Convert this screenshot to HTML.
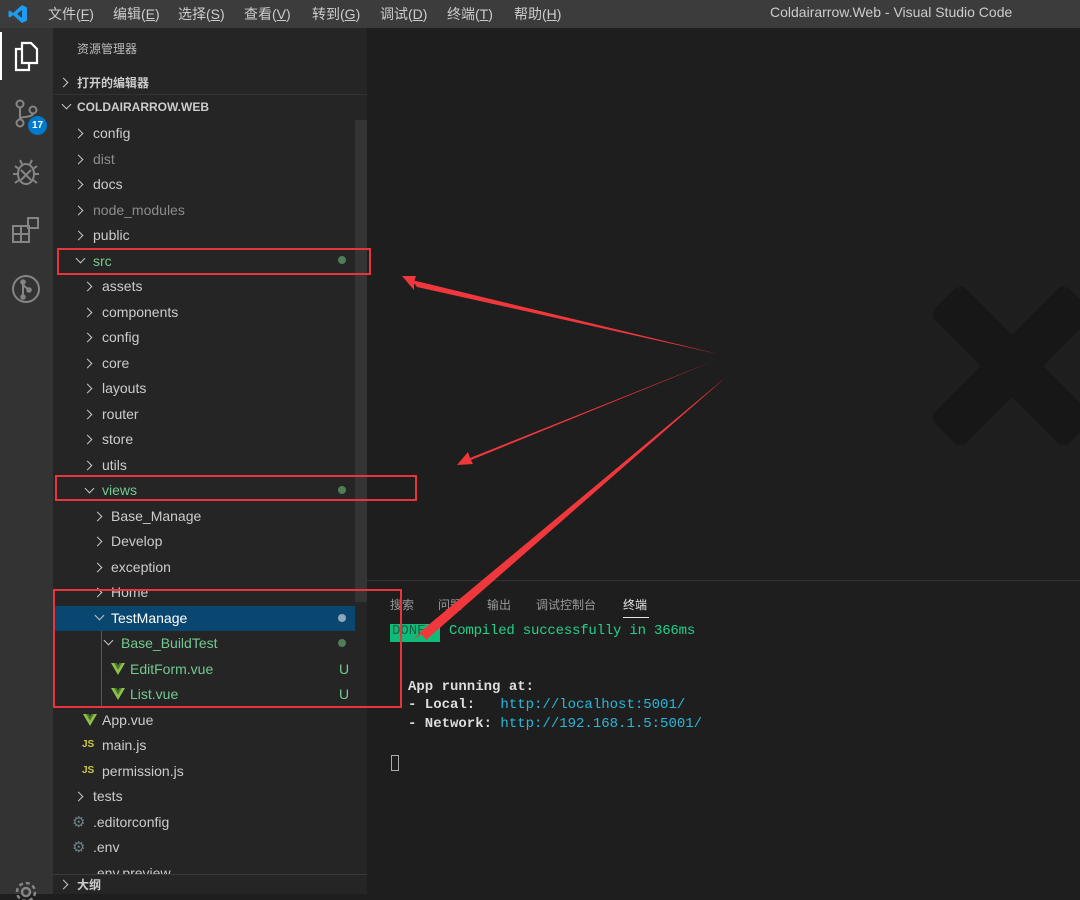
<!DOCTYPE html>
<html><head><meta charset="utf-8"><style>
*{margin:0;padding:0;box-sizing:border-box}
body{width:1080px;height:894px;overflow:hidden;background:#1e1e1e;font-family:"Liberation Sans","Noto Sans CJK SC",sans-serif;position:relative;color:#ccc}
.a{position:absolute}
.m{position:absolute;top:4px;font-size:14px;color:#ccc;white-space:nowrap}
.r{position:absolute;height:25px;font-size:14px;line-height:25px;color:#cccccc;white-space:nowrap}
.ch{position:absolute;width:7px;height:7px;border-right:1.5px solid #c5c5c5;border-bottom:1.5px solid #c5c5c5}
.cr{transform:rotate(-45deg)}
.cd{transform:rotate(45deg)}
.dot{position:absolute;left:338px;width:8px;height:8px;border-radius:50%;background:#4e7d57}
.g{color:#73c991}
.mono{font-family:"Liberation Mono","DejaVu Sans Mono",monospace;font-size:14px;position:absolute;white-space:pre}
.box{position:absolute;border:2px solid #e8353a}
.t{position:absolute;top:596px;font-size:12px;color:#999;white-space:nowrap}
</style></head><body>
<!-- title bar -->
<div class="a" style="left:0;top:0;width:1080px;height:28px;background:#3c3c3c"></div>
<svg class="a" style="left:8px;top:4px" width="20" height="20" viewBox="0 0 20 20"><path d="M14 1 L19 3.5 V16.5 L14 19 L5 11 L2 13.5 L0.5 12.5 V7.5 L2 6.5 L5 9 Z M14 6 L9 10 L14 14 Z" fill="#1f9cf0" fill-rule="evenodd"/></svg>
<div class="m" style="left:48px">文件(<u>F</u>)</div>
<div class="m" style="left:113px">编辑(<u>E</u>)</div>
<div class="m" style="left:178px">选择(<u>S</u>)</div>
<div class="m" style="left:244px">查看(<u>V</u>)</div>
<div class="m" style="left:312px">转到(<u>G</u>)</div>
<div class="m" style="left:380px">调试(<u>D</u>)</div>
<div class="m" style="left:447px">终端(<u>T</u>)</div>
<div class="m" style="left:514px">帮助(<u>H</u>)</div>
<div class="a" style="left:770px;top:4px;font-size:14px;color:#ccc">Coldairarrow.Web - Visual Studio Code</div>
<!-- activity bar -->
<div class="a" style="left:0;top:28px;width:53px;height:866px;background:#333333"></div>
<div class="a" style="left:0;top:32px;width:2px;height:48px;background:#fff"></div>
<svg class="a" style="left:12px;top:40px" width="28" height="32" viewBox="0 0 28 32" fill="none" stroke="#fff" stroke-width="2.2"><path d="M10 3 H19 L25 9 V23 H10 Z"/><path d="M10 9 H4 V30 H17 V23"/></svg>
<svg class="a" style="left:12px;top:98px" width="30" height="32" viewBox="0 0 30 32" fill="none" stroke="#858585" stroke-width="2"><circle cx="8" cy="6" r="3.5"/><circle cx="8" cy="25" r="3.5"/><circle cx="21" cy="12" r="3.5"/><path d="M8 9.5 V21.5 M21 15.5 C21 20 8 18 8 21"/></svg>
<div class="a" style="left:28px;top:116px;width:19px;height:19px;border-radius:50%;background:#007acc;color:#fff;font-size:10px;font-weight:bold;text-align:center;line-height:19px">17</div>
<svg class="a" style="left:10px;top:157px" width="32" height="32" viewBox="0 0 32 32" fill="none" stroke="#858585" stroke-width="2"><ellipse cx="16" cy="17" rx="8" ry="10"/><path d="M11 13 L21 23 M21 13 L11 23 M3 17 H8 M24 17 H29 M5 9 L9 12 M27 9 L23 12 M5 26 L9 23 M27 26 L23 23 M12 7 L10 3 M20 7 L22 3"/></svg>
<svg class="a" style="left:10px;top:215px" width="32" height="32" viewBox="0 0 32 32" fill="none" stroke="#858585" stroke-width="2"><rect x="3" y="11" width="8" height="8"/><rect x="11" y="11" width="8" height="8"/><rect x="3" y="19" width="8" height="8"/><rect x="11" y="19" width="8" height="8"/><rect x="18" y="3" width="10" height="10"/></svg>
<svg class="a" style="left:10px;top:273px" width="32" height="32" viewBox="0 0 32 32" fill="none" stroke="#858585" stroke-width="2"><circle cx="16" cy="16" r="13"/><path d="M13 8 V24 M13 12 L19 17"/><circle cx="13" cy="24" r="1.8" fill="#858585"/><circle cx="13" cy="9" r="1.8" fill="#858585"/><circle cx="19" cy="17" r="1.8" fill="#858585"/></svg>
<svg class="a" style="left:10px;top:876px" width="32" height="24" viewBox="0 0 32 24" fill="none" stroke="#858585" stroke-width="2.5"><circle cx="16" cy="16" r="9" stroke-dasharray="4 3"/><circle cx="16" cy="16" r="4"/></svg>
<!-- sidebar -->
<div class="a" style="left:53px;top:28px;width:314px;height:866px;background:#252526"></div>
<div class="a" style="left:355px;top:120px;width:12px;height:482px;background:#343435"></div>
<div class="a" style="left:77px;top:40px;font-size:12px;color:#bbb">资源管理器</div>
<div class="ch cr" style="left:60px;top:79px"></div>
<div class="a" style="left:77px;top:74px;font-size:12px;font-weight:bold;color:#ccc">打开的编辑器</div>
<div class="a" style="left:53px;top:94px;width:314px;height:1px;background:#333"></div>
<div class="ch cd" style="left:63px;top:101px"></div>
<div class="a" style="left:77px;top:100px;font-size:12px;font-weight:bold;color:#ccc">COLDAIRARROW.WEB</div>
<div class="a" style="left:53px;top:606px;width:302px;height:25px;background:#094771"></div>
<div class="a" style="left:101px;top:631px;width:1px;height:77px;background:#585858"></div>

<div class="ch cr" style="left:75px;top:130px"></div><div class="r" style="left:93px;top:121px">config</div>
<div class="ch cr" style="left:75px;top:156px"></div><div class="r" style="left:93px;top:147px;color:#8c8c8c">dist</div>
<div class="ch cr" style="left:75px;top:181px"></div><div class="r" style="left:93px;top:172px">docs</div>
<div class="ch cr" style="left:75px;top:207px"></div><div class="r" style="left:93px;top:198px;color:#8c8c8c">node_modules</div>
<div class="ch cr" style="left:75px;top:232px"></div><div class="r" style="left:93px;top:223px">public</div>
<div class="ch cd" style="left:77px;top:255px"></div><div class="r g" style="left:93px;top:249px">src</div><div class="dot" style="top:256px"></div>
<div class="ch cr" style="left:84px;top:283px"></div><div class="r" style="left:102px;top:274px">assets</div>
<div class="ch cr" style="left:84px;top:309px"></div><div class="r" style="left:102px;top:300px">components</div>
<div class="ch cr" style="left:84px;top:334px"></div><div class="r" style="left:102px;top:325px">config</div>
<div class="ch cr" style="left:84px;top:360px"></div><div class="r" style="left:102px;top:351px">core</div>
<div class="ch cr" style="left:84px;top:385px"></div><div class="r" style="left:102px;top:376px">layouts</div>
<div class="ch cr" style="left:84px;top:411px"></div><div class="r" style="left:102px;top:402px">router</div>
<div class="ch cr" style="left:84px;top:436px"></div><div class="r" style="left:102px;top:427px">store</div>
<div class="ch cr" style="left:84px;top:462px"></div><div class="r" style="left:102px;top:453px">utils</div>
<div class="ch cd" style="left:86px;top:485px"></div><div class="r g" style="left:102px;top:478px">views</div><div class="dot" style="top:486px"></div>
<div class="ch cr" style="left:94px;top:513px"></div><div class="r" style="left:111px;top:504px">Base_Manage</div>
<div class="ch cr" style="left:94px;top:538px"></div><div class="r" style="left:111px;top:529px">Develop</div>
<div class="ch cr" style="left:94px;top:564px"></div><div class="r" style="left:111px;top:555px">exception</div>
<div class="ch cr" style="left:94px;top:589px"></div><div class="r" style="left:111px;top:580px">Home</div>
<div class="ch cd" style="left:96px;top:612px"></div><div class="r" style="left:111px;top:606px;color:#fff">TestManage</div><div class="dot" style="top:614px;background:#8fa6bf"></div>
<div class="ch cd" style="left:105px;top:637px"></div><div class="r g" style="left:121px;top:631px">Base_BuildTest</div><div class="dot" style="top:639px"></div>
<svg class="a" style="left:111px;top:663px" width="14" height="12" viewBox="0 0 14 12"><path d="M0 0H5.5L7 3L8.5 0H14L7 12Z" fill="#8dc149"/><path d="M3 0H5.5L7 3L8.5 0H11L7 7Z" fill="#4f7a2a"/></svg>
<div class="r g" style="left:130px;top:657px">EditForm.vue</div><div class="r g" style="left:339px;top:657px">U</div>
<svg class="a" style="left:111px;top:688px" width="14" height="12" viewBox="0 0 14 12"><path d="M0 0H5.5L7 3L8.5 0H14L7 12Z" fill="#8dc149"/><path d="M3 0H5.5L7 3L8.5 0H11L7 7Z" fill="#4f7a2a"/></svg>
<div class="r g" style="left:130px;top:682px">List.vue</div><div class="r g" style="left:339px;top:682px">U</div>
<svg class="a" style="left:83px;top:714px" width="14" height="12" viewBox="0 0 14 12"><path d="M0 0H5.5L7 3L8.5 0H14L7 12Z" fill="#8dc149"/><path d="M3 0H5.5L7 3L8.5 0H11L7 7Z" fill="#4f7a2a"/></svg>
<div class="r" style="left:102px;top:708px">App.vue</div>
<div class="a" style="left:82px;top:739px;font-size:10px;font-weight:bold;color:#cbcb41">JS</div><div class="r" style="left:102px;top:733px">main.js</div>
<div class="a" style="left:82px;top:765px;font-size:10px;font-weight:bold;color:#cbcb41">JS</div><div class="r" style="left:102px;top:759px">permission.js</div>
<div class="ch cr" style="left:75px;top:793px"></div><div class="r" style="left:93px;top:784px">tests</div>
<div class="a" style="left:72px;top:813px;font-size:15px;color:#6d8086">⚙</div><div class="r" style="left:93px;top:810px">.editorconfig</div>
<div class="a" style="left:72px;top:838px;font-size:15px;color:#6d8086">⚙</div><div class="r" style="left:93px;top:835px">.env</div>
<div class="r" style="left:93px;top:861px">.env.preview</div>
<div class="a" style="left:53px;top:874px;width:314px;height:20px;background:#252526;border-top:1px solid #3a3a3a"></div>
<div class="ch cr" style="left:60px;top:881px"></div>
<div class="a" style="left:77px;top:876px;font-size:12px;font-weight:bold;color:#ccc">大纲</div>
<!-- editor watermark -->
<div class="a" style="left:367px;top:28px;width:713px;height:552px;overflow:hidden">
<div class="a" style="left:550px;top:316px;width:190px;height:44px;border-radius:9px;background:#171717;transform:rotate(45deg)"></div>
<div class="a" style="left:550px;top:316px;width:190px;height:44px;border-radius:9px;background:#171717;transform:rotate(-45deg)"></div>
</div>
<!-- panel -->
<div class="a" style="left:367px;top:580px;width:713px;height:314px;background:#1e1e1e;border-top:1px solid #333"></div>
<div class="t" style="left:390px">搜索</div>
<div class="t" style="left:438px">问题</div>
<div class="t" style="left:487px">输出</div>
<div class="t" style="left:536px">调试控制台</div>
<div class="t" style="left:623px;color:#e7e7e7">终端</div>
<div class="a" style="left:623px;top:617px;width:26px;height:1px;background:#e7e7e7"></div>
<div class="a" style="left:390px;top:624px;width:50px;height:18px;background:#0dbc79"></div>
<div class="mono" style="left:392px;top:623px;color:#1e5e44">DONE</div>
<div class="mono" style="left:449px;top:623px;color:#23d18b;letter-spacing:-0.2px">Compiled successfully in 366ms</div>
<div class="mono" style="left:408px;top:679px;color:#ddd;font-weight:bold">App running at:</div>
<div class="mono" style="left:408px;top:697px;color:#ddd;font-weight:bold">- Local:   <span style="color:#29b8db;font-weight:normal">http://localhost:5001/</span></div>
<div class="mono" style="left:408px;top:716px;color:#ddd;font-weight:bold">- Network: <span style="color:#29b8db;font-weight:normal">http://192.168.1.5:5001/</span></div>
<div class="a" style="left:391px;top:755px;width:8px;height:16px;border:1.5px solid #aaa"></div>
<!-- annotations -->
<div class="box" style="left:57px;top:248px;width:314px;height:27px"></div>
<div class="box" style="left:55px;top:475px;width:362px;height:26px"></div>
<div class="box" style="left:53px;top:589px;width:349px;height:119px"></div>
<svg class="a" style="left:0;top:0" width="1080" height="894" viewBox="0 0 1080 894">
<path d="M718 354 L414 282 L416 276 L402 276 L414 290 L414 284 Z" fill="#f0383c"/>
<path d="M718 354 L412 280 L417 287 Z" fill="#f0383c"/>
<path d="M716 360 L470 458 L468 452 L457 465 L473 464 L471 460 Z" fill="#f0383c"/>
<path d="M725 378 L418 635 L412 640 L424 633 L428 638 Z" fill="#f0383c"/>
<path d="M725 378 L420 632 L426 640 Z" fill="#f0383c"/>
</svg>
</body></html>
